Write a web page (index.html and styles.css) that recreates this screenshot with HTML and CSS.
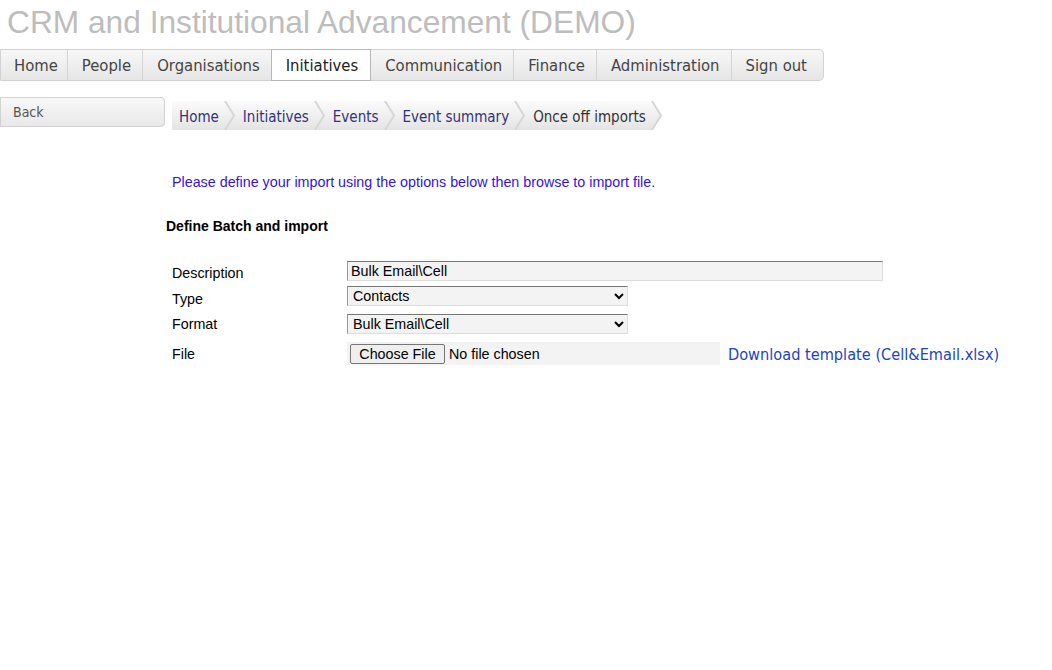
FILE: index.html
```html
<!DOCTYPE html>
<html>
<head>
<meta charset="utf-8">
<title>CRM and Institutional Advancement (DEMO)</title>
<link rel="stylesheet" href="styles.css">
</head>
<body>
<header class="site-title">CRM and Institutional Advancement (DEMO)</header>
<nav class="mainnav">
  <a class="nav-item first">Home</a>
  <a class="nav-item">People</a>
  <a class="nav-item">Organisations</a>
  <a class="nav-item active">Initiatives</a>
  <a class="nav-item">Communication</a>
  <a class="nav-item">Finance</a>
  <a class="nav-item">Administration</a>
  <a class="nav-item last">Sign out</a>
</nav>
<div class="main">
  <aside class="side">
    <a class="back-btn">Back</a>
  </aside>
  <section class="content">
    <div class="crumbs">
      <a class="crumb">Home</a>
      <svg class="sep" width="12" height="29" viewBox="0 0 12 29"><polyline points="1,0 10,14.5 1,29" fill="none" stroke="#d6d6d6" stroke-width="2"/></svg>
      <a class="crumb">Initiatives</a>
      <svg class="sep" width="12" height="29" viewBox="0 0 12 29"><polyline points="1,0 10,14.5 1,29" fill="none" stroke="#d6d6d6" stroke-width="2"/></svg>
      <a class="crumb">Events</a>
      <svg class="sep" width="12" height="29" viewBox="0 0 12 29"><polyline points="1,0 10,14.5 1,29" fill="none" stroke="#d6d6d6" stroke-width="2"/></svg>
      <a class="crumb">Event summary</a>
      <svg class="sep" width="12" height="29" viewBox="0 0 12 29"><polyline points="1,0 10,14.5 1,29" fill="none" stroke="#d6d6d6" stroke-width="2"/></svg>
      <span class="crumb current">Once off imports</span>
      <svg class="sep-end" width="14" height="29" viewBox="0 0 14 29"><defs><linearGradient id="g" x1="0" y1="0" x2="0" y2="1"><stop offset="0" stop-color="#fbfbfb"/><stop offset="1" stop-color="#e4e4e4"/></linearGradient></defs><polygon points="0,0 1,0 10,14.5 1,29 0,29" fill="url(#g)"/><polyline points="1,0 10,14.5 1,29" fill="none" stroke="#d6d6d6" stroke-width="2"/></svg>
    </div>
    <p class="intro">Please define your import using the options below then browse to import file.</p>
    <h3 class="section-title">Define Batch and import</h3>
    <div class="form">
      <div class="row r1">
        <label class="lbl">Description</label>
        <input class="txt" type="text" value="Bulk Email\Cell">
      </div>
      <div class="row r2">
        <label class="lbl">Type</label>
        <select class="sel"><option>Contacts</option></select>
      </div>
      <div class="row r3">
        <label class="lbl">Format</label>
        <select class="sel"><option>Bulk Email\Cell</option></select>
      </div>
      <div class="row r4">
        <label class="lbl">File</label>
        <div class="file">
          <span class="file-btn">Choose File</span>
          <span class="file-name">No file chosen</span>
        </div>
        <a class="download">Download template (Cell&amp;Email.xlsx)</a>
      </div>
    </div>
  </section>
</div>
</body>
</html>
```

FILE: styles.css
```css
* { box-sizing: border-box; }
html, body { margin: 0; padding: 0; background: #fff; }
body { font-family: "Liberation Sans", Arial, sans-serif; font-size: 14.3px; color: #000; }

.site-title {
  font-family: "Liberation Sans", Arial, sans-serif;
  font-size: 31.7px;
  color: #bdbdbd;
  padding: 4px 0 0 7px;
  height: 49px;
  line-height: 36px;
}

.mainnav {
  display: flex;
  width: 824px;
  height: 32px;
  border: 1px solid #d2d2d2;
  border-radius: 0 5px 5px 0;
  background: linear-gradient(#f7f7f7, #e6e6e6);
  font-family: "DejaVu Sans Condensed", "DejaVu Sans", sans-serif;
  font-size: 16.5px;
}
.nav-item {
  display: flex;
  align-items: center;
  padding: 1px 11px 0 14px;
  color: #444;
  border-right: 1px solid #d4d4d4;
  height: 100%;
}
.nav-item.first { padding: 1px 9px 0 13px; }
.nav-item.last { border-right: none; }
.nav-item.active {
  background: #fff;
  color: #222;
  border: 1px solid #b8b8b8;
  margin: -1px 0 -1px -1px;
  height: 32px;
  padding-right: 12px;
}

.main { display: flex; padding-top: 15px; }
.side { width: 172px; flex: none; }
.back-btn {
  display: flex;
  align-items: center;
  width: 165px;
  height: 30px;
  padding-left: 12px;
  border: 1px solid #d2d2d2;
  border-radius: 0 4px 4px 0;
  background: linear-gradient(#f8f8f8, #e8e8e8);
  font-family: "DejaVu Sans Condensed", "DejaVu Sans", sans-serif;
  font-size: 14px;
  color: #555;
  margin-top: 1px;
}
.content { flex: 1; }

.crumbs {
  display: flex;
  align-items: stretch;
  height: 29px;
  margin-top: 5px;
  font-family: "DejaVu Sans Condensed", "DejaVu Sans", sans-serif;
  font-size: 15px;
}
.crumb {
  display: flex;
  align-items: center;
  padding: 2px 5px 0 7px;
  background: linear-gradient(#fbfbfb, #e4e4e4);
  color: #33337a;
}
.crumb.current { color: #333; }
.sep { display: block; background: linear-gradient(#fbfbfb, #e4e4e4); flex: none; }
.sep-end { display: block; flex: none; }

.intro {
  margin: 44px 0 0 0;
  color: #3311ee;
  font-size: 14.3px;
  line-height: 16px;
}
.section-title {
  margin: 28px 0 0 -6px;
  font-size: 14px;
  font-weight: bold;
  line-height: 16px;
}

.form { margin-top: 27px; display: flex; flex-direction: column; }
.row { display: flex; align-items: center; }
.lbl { width: 175px; flex: none; font-size: 14.3px; }
.r1 { height: 20px; }
.r1 .lbl { padding-top: 4px; }
.r2 { height: 20px; margin-top: 5px; }
.r2 .lbl { padding-top: 5px; }
.r3 { height: 20px; margin-top: 8px; }
.r4 { height: 23px; margin-top: 8px; }
.r4 .lbl { padding-top: 0; }

.txt {
  width: 536px;
  height: 20px;
  border: 1px solid #ddd;
  border-top-color: #777;
  border-left-color: #999;
  background: #f3f3f3;
  font-family: "Liberation Sans", Arial, sans-serif;
  font-size: 14.3px;
  padding: 0 3px;
  margin: 0;
}
.sel {
  width: 281px;
  height: 20px;
  border: 1px solid #ddd;
  border-top-color: #777;
  border-left-color: #999;
  background: #f3f3f3;
  font-family: "Liberation Sans", Arial, sans-serif;
  font-size: 14.3px;
  padding: 0 1px;
  margin: 0;
  color: #000;
}
.file {
  display: flex;
  align-items: center;
  width: 373px;
  height: 23px;
  background: #f3f3f3;
  padding-left: 3px;
}
.file-btn {
  display: flex;
  align-items: center;
  justify-content: center;
  width: 95px;
  height: 20px;
  border: 1px solid #767676;
  border-radius: 2px;
  background: #efefef;
  font-size: 14.3px;
  color: #000;
}
.file-name { padding-left: 4px; font-size: 14.3px; }
.download {
  margin-left: 8px;
  font-family: "DejaVu Sans Condensed", "DejaVu Sans", sans-serif;
  font-size: 16.2px;
  color: #1a44c8;
  padding-top: 2px;
}
```
